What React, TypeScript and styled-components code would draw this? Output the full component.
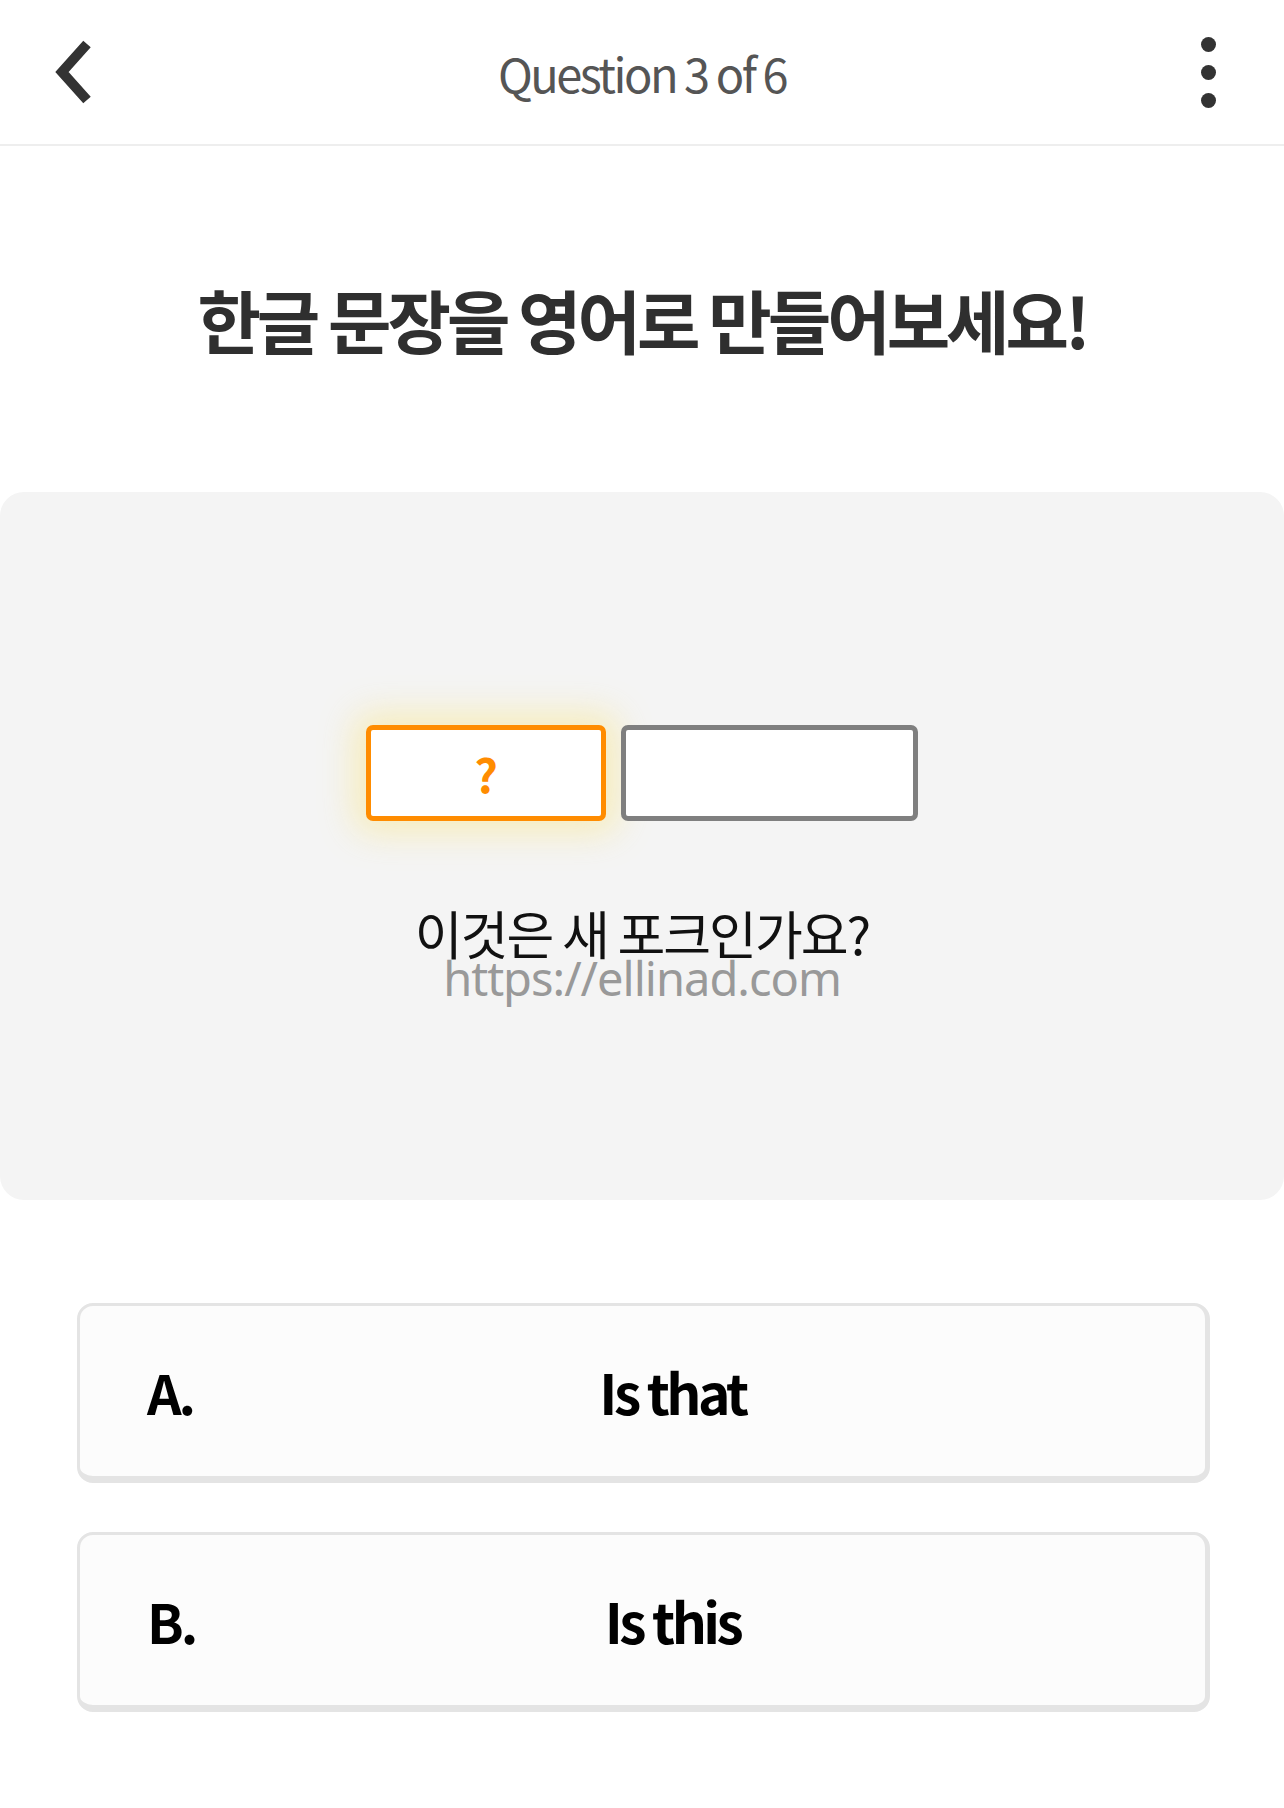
import React from "react";
import styled, { createGlobalStyle } from "styled-components";

const GlobalStyle = createGlobalStyle`
  html, body {
    margin: 0;
    padding: 0;
    background: #ffffff;
  }
  body {
    font-family: "Noto Sans CJK KR", "Noto Sans", sans-serif;
  }
`;

const Page = styled.div`
  width: 1284px;
  min-height: 1808px;
  display: flex;
  flex-direction: column;
  background: #fff;
`;

const TopBar = styled.header`
  height: 144px;
  border-bottom: 2px solid #eeeeee;
  display: grid;
  grid-template-columns: 160px 1fr 160px;
  align-items: center;
`;

const BackButton = styled.button`
  justify-self: start;
  margin-left: 48px;
  border: none;
  background: none;
  padding: 0;
  width: 48px;
  height: 66px;
  display: flex;
  align-items: center;
  justify-content: center;
`;

const Title = styled.h1`
  margin: 0;
  text-align: center;
  font-size: 47px;
  font-weight: 400;
  letter-spacing: -2.5px;
  color: #555555;
`;

const MoreButton = styled.button`
  justify-self: end;
  margin-right: 68px;
  border: none;
  background: none;
  padding: 0;
  display: flex;
  flex-direction: column;
  gap: 13px;
  align-items: center;
`;

const Dot = styled.span`
  width: 15px;
  height: 15px;
  border-radius: 50%;
  background: #333;
`;

const Instruction = styled.h2`
  margin: 0;
  height: 346px;
  display: flex;
  align-items: center;
  justify-content: center;
  font-size: 69px;
  font-weight: 700;
  letter-spacing: -4px;
  color: #2f2f2f;
`;

const Panel = styled.section`
  height: 708px;
  background: #f4f4f4;
  border-radius: 24px;
  display: flex;
  flex-direction: column;
  align-items: center;
  padding-top: 233px;
  box-sizing: border-box;
`;

const Slots = styled.div`
  display: flex;
  gap: 15px;
`;

const Slot = styled.div<{ $active?: boolean; $w: number }>`
  width: ${(p) => p.$w}px;
  height: 96px;
  box-sizing: border-box;
  background: #fff;
  border: 5px solid ${(p) => (p.$active ? "#ff8c00" : "#7f7f7f")};
  border-radius: 7px;
  display: flex;
  align-items: center;
  justify-content: center;
  font-size: 46px;
  font-weight: 700;
  color: #ff8c00;
  box-shadow: ${(p) =>
    p.$active ? "0 0 34px 12px rgba(250, 228, 120, 0.45)" : "none"};
`;

const Sentence = styled.p`
  margin: 82px 0 0;
  font-size: 52px;
  line-height: 60px;
  font-weight: 400;
  letter-spacing: -2px;
  color: #111;
`;

const Watermark = styled.p`
  margin: -12px 0 0;
  font-family: "Noto Sans", sans-serif;
  font-size: 47px;
  line-height: 54px;
  letter-spacing: -1px;
  color: #999999;
`;

const Options = styled.div`
  display: flex;
  flex-direction: column;
  gap: 49px;
  width: 1133px;
  margin: 103px auto 0 77px;
`;

const Option = styled.button`
  height: 180px;
  box-sizing: border-box;
  border: 3px solid #e4e4e4;
  border-bottom-width: 7px;
  border-right-width: 5px;
  border-radius: 16px;
  background: #fcfcfc;
  padding: 0 67px;
  display: flex;
  align-items: center;
  font-family: "Noto Sans CJK KR", "Noto Sans", sans-serif;
  color: #000;
`;

const Label = styled.span`
  width: 60px;
  text-align: left;
  font-size: 54px;
  font-weight: 700;
  letter-spacing: -3px;
`;

const Answer = styled.span`
  flex: 1;
  text-align: center;
  font-size: 55px;
  font-weight: 700;
  letter-spacing: -3.5px;
`;

export default function App() {
  return (
    <Page>
      <GlobalStyle />
      <TopBar>
        <BackButton aria-label="back">
          <svg width="42" height="66" viewBox="0 0 42 66">
            <path
              d="M36 5 L11 33 L36 61"
              fill="none"
              stroke="#333"
              strokeWidth="10"
              strokeLinejoin="miter"
            />
          </svg>
        </BackButton>
        <Title>Question 3 of 6</Title>
        <MoreButton aria-label="more">
          <Dot />
          <Dot />
          <Dot />
        </MoreButton>
      </TopBar>

      <Instruction>한글 문장을 영어로 만들어보세요!</Instruction>

      <Panel>
        <Slots>
          <Slot $active $w={240}>?</Slot>
          <Slot $w={297} />
        </Slots>
        <Sentence>이것은 새 포크인가요?</Sentence>
        <Watermark>https://ellinad.com</Watermark>
      </Panel>

      <Options>
        <Option>
          <Label>A.</Label>
          <Answer>Is that</Answer>
        </Option>
        <Option>
          <Label>B.</Label>
          <Answer>Is this</Answer>
        </Option>
      </Options>
    </Page>
  );
}
